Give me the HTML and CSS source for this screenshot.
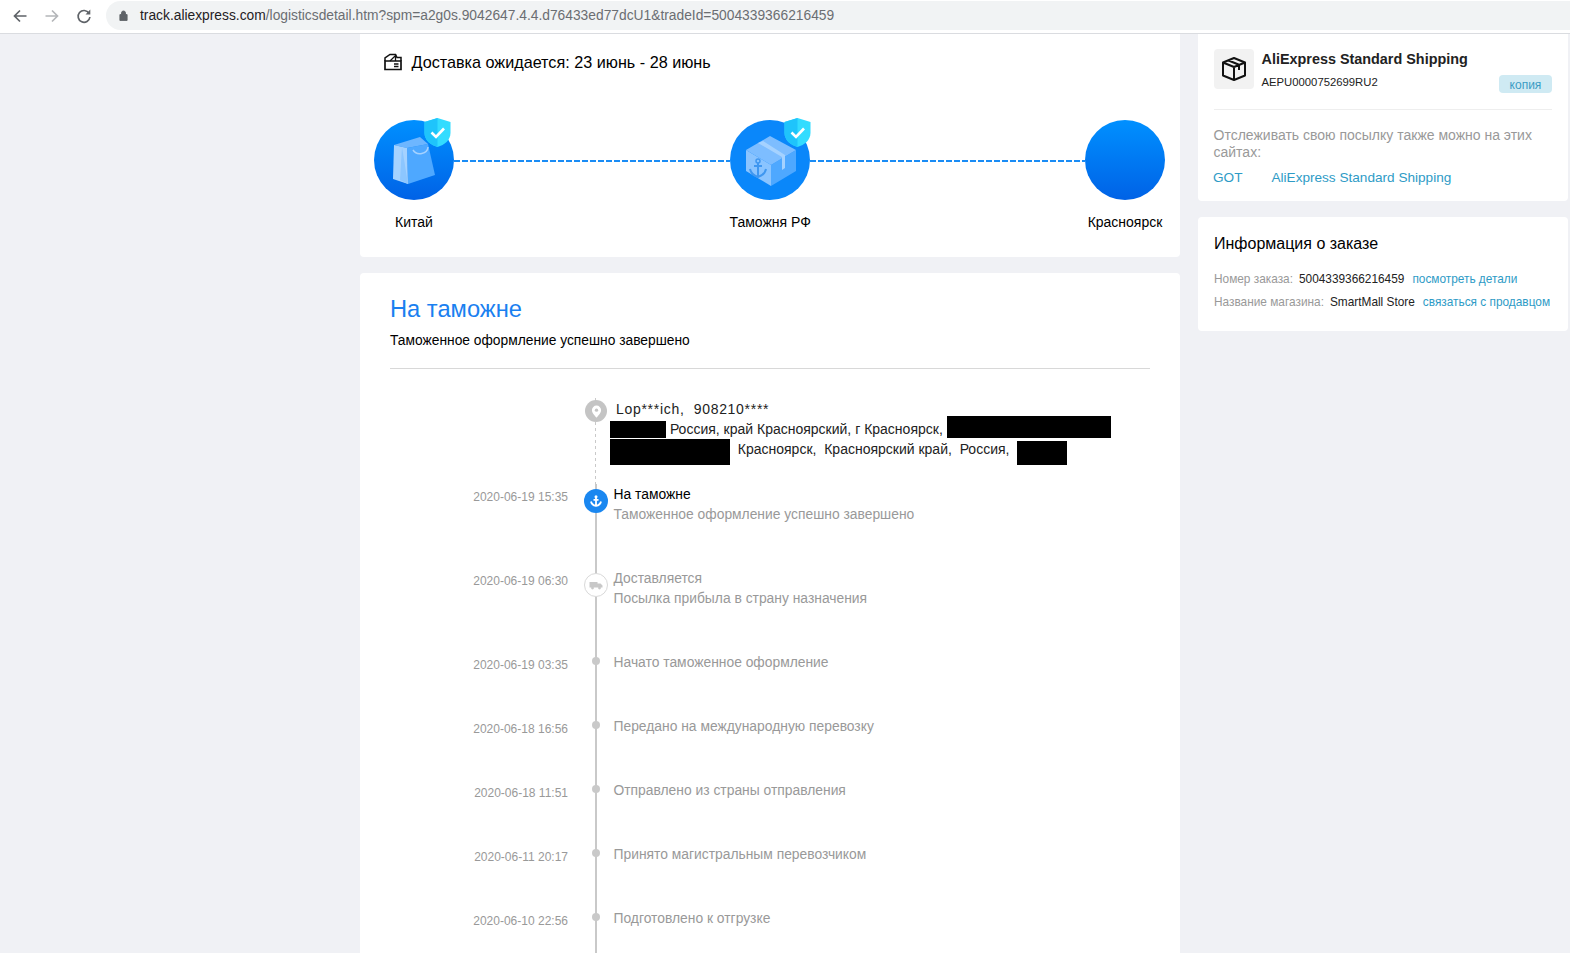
FILE: index.html
```html
<!DOCTYPE html>
<html lang="ru">
<head>
    <meta charset="UTF-8">
    <title>Logistics detail</title>
    <link rel="stylesheet" href="styles.css">
</head>
<body>
<div class="toolbar">
    <svg class="nav-icon" viewBox="0 0 16 16"><path d="M14.5 8H2.5M8 2.5L2.5 8L8 13.5" fill="none" stroke="#5f6368" stroke-width="1.7"/></svg>
    <svg class="nav-icon" viewBox="0 0 16 16"><path d="M1.5 8H13.5M8 2.5L13.5 8L8 13.5" fill="none" stroke="#b4b6b9" stroke-width="1.7"/></svg>
    <svg class="nav-icon" viewBox="0 0 16 16"><path d="M13 5.2A5.9 5.9 0 1 0 13.9 9" fill="none" stroke="#5f6368" stroke-width="1.7"/><path d="M14.3 1.6V6.4H9.5z" fill="#5f6368"/></svg>
    <div class="address">
        <svg class="lock" viewBox="0 0 10 12"><path d="M1 5h8v6.5H1zM2.8 5V3.2a2.2 2.2 0 0 1 4.4 0V5" fill="#5f6368" stroke="#5f6368" stroke-width="1"/></svg>
        <span class="host">track.aliexpress.com</span><span>/logisticsdetail.htm?spm=a2g0s.9042647.4.4.d76433ed77dcU1&amp;tradeId=5004339366216459</span>
    </div>
</div>

<div class="page">
    <div class="main-col">
        <div class="card delivery">
            <div class="eta">
                <svg class="eta-icon" viewBox="0 0 20 18"><path d="M2 8V16.5H18V8z" fill="none" stroke="#111" stroke-width="1.7"/><path d="M2 8V5L7 1.5H12.5L14 4.5H18V8" fill="none" stroke="#111" stroke-width="1.5"/><path d="M7 8L12.5 2.5V8" fill="none" stroke="#111" stroke-width="1.3"/><path d="M11 11H15.5M11 13.6H15.5" stroke="#111" stroke-width="1.5"/></svg>
                <span>Доставка ожидается: 23 июнь - 28 июнь</span>
            </div>
            <div class="route">
                <div class="stop">
                    <div class="stop-circle">
                        <svg class="stop-art" viewBox="0 0 80 80">
                            <path d="M33 28L54 24L61 55L34 64z" fill="#4ea8ff"/>
                            <path d="M20 25L46 17L54 24L33 28z" fill="#6db6ff"/>
                            <path d="M20 25L33 28L34 64L19 59z" fill="#a5d2ff"/>
                            <path d="M28 27L26 60L34 64z" fill="#8cc6ff"/>
                            <path d="M39 30a8 7 0 0 0 15 -3" fill="none" stroke="#a5d2ff" stroke-width="1.5"/>
                        </svg>
                        <svg class="shield" viewBox="0 0 26 30"><path d="M13 0L26 4V15C26 22 20 27 13 29C6 27 0 22 0 15V4z" fill="#33dcff"/><path d="M13 0L0 4V15C0 22 6 27 13 29z" fill="#1fc4fb"/><path d="M7 14.5L11.5 19L19.5 10.5" fill="none" stroke="#fff" stroke-width="2.6"/></svg>
                    </div>
                    <div class="stop-name">Китай</div>
                </div>
                <div class="dash"></div>
                <div class="stop">
                    <div class="stop-circle flat">
                        <svg class="stop-art" viewBox="0 0 80 80">
                            <path d="M41 45L66 30V51L41 66z" fill="#4ea8ff"/>
                            <path d="M16 30L40 16L66 30L41 45z" fill="#7dbdff"/>
                            <path d="M16 30L41 45V66L16 51z" fill="#8ac4ff"/>
                            <path d="M28 23L33 21L55 35V48L52 50V37z" fill="#a5d2ff"/>
                            <circle cx="28" cy="41" r="2" fill="none" stroke="#3f97f0" stroke-width="1.5"/>
                            <path d="M28 43V57M24 46H32M20 49C21 54 25 56 28 57C31 56 35 54 36 49" fill="none" stroke="#3f97f0" stroke-width="2"/>
                        </svg>
                        <svg class="shield shield-right" viewBox="0 0 26 30"><path d="M13 0L26 4V15C26 22 20 27 13 29C6 27 0 22 0 15V4z" fill="#33dcff"/><path d="M13 0L0 4V15C0 22 6 27 13 29z" fill="#1fc4fb"/><path d="M7 14.5L11.5 19L19.5 10.5" fill="none" stroke="#fff" stroke-width="2.6"/></svg>
                    </div>
                    <div class="stop-name">Таможня РФ</div>
                </div>
                <div class="dash"></div>
                <div class="stop">
                    <div class="stop-circle"></div>
                    <div class="stop-name">Красноярск</div>
                </div>
            </div>
        </div>

        <div class="card tracking">
            <h2 class="status-title">На таможне</h2>
            <div class="status-text">Таможенное оформление успешно завершено</div>
            <div class="divider"></div>

            <div class="row row-address">
                <div class="time"></div>
                <div class="axis axis-dashed">
                    <span class="dot dot-pin"><svg viewBox="0 0 12 14" width="11" height="13"><path d="M6 0.5A5 5 0 0 0 1 5.5C1 9 6 13.5 6 13.5C6 13.5 11 9 11 5.5A5 5 0 0 0 6 0.5z" fill="#fff"/><circle cx="6" cy="5.5" r="1.8" fill="#c4c4c4"/></svg></span>
                </div>
                <div class="address-text">
                    <div class="addr-name">Lop***ich,&nbsp; 908210****</div>
                    <div class="addr-line"><span class="redact r1"></span> Россия, край Красноярский, г Красноярск, <span class="redact r2"></span></div>
                    <div class="addr-line"><span class="redact r3"></span> &nbsp;Красноярск,&nbsp; Красноярский край,&nbsp; Россия,&nbsp; <span class="redact r4"></span></div>
                </div>
            </div>

            <div class="row row-big">
                <div class="time">2020-06-19 15:35</div>
                <div class="axis">
                    <span class="dot dot-now"><svg viewBox="0 0 14 14" width="14" height="14"><path d="M7 3.5V12M2 7.5C2.5 10.5 5 11.5 7 12C9 11.5 11.5 10.5 12 7.5M4.5 5.8H9.5" fill="none" stroke="#fff" stroke-width="1.8"/><circle cx="7" cy="2.8" r="1.5" fill="#fff"/></svg></span>
                </div>
                <div class="event">
                    <div class="event-title now">На таможне</div>
                    <div>Таможенное оформление успешно завершено</div>
                </div>
            </div>

            <div class="row row-big">
                <div class="time">2020-06-19 06:30</div>
                <div class="axis">
                    <span class="dot dot-truck"><svg viewBox="0 0 14 10" width="14" height="10"><path d="M0.5 2H8.5V7.5H0.5zM8.5 3.5H11.5L13.5 5.5V7.5H8.5z" fill="#c8c8c8"/><circle cx="3.5" cy="8" r="1.4" fill="#c8c8c8"/><circle cx="10.5" cy="8" r="1.4" fill="#c8c8c8"/></svg></span>
                </div>
                <div class="event">
                    <div class="event-title">Доставляется</div>
                    <div>Посылка прибыла в страну назначения</div>
                </div>
            </div>

            <div class="row">
                <div class="time">2020-06-19 03:35</div>
                <div class="axis"><span class="dot dot-small"></span></div>
                <div class="event">Начато таможенное оформление</div>
            </div>
            <div class="row">
                <div class="time">2020-06-18 16:56</div>
                <div class="axis"><span class="dot dot-small"></span></div>
                <div class="event">Передано на международную перевозку</div>
            </div>
            <div class="row">
                <div class="time">2020-06-18 11:51</div>
                <div class="axis"><span class="dot dot-small"></span></div>
                <div class="event">Отправлено из страны отправления</div>
            </div>
            <div class="row">
                <div class="time">2020-06-11 20:17</div>
                <div class="axis"><span class="dot dot-small"></span></div>
                <div class="event">Принято магистральным перевозчиком</div>
            </div>
            <div class="row">
                <div class="time">2020-06-10 22:56</div>
                <div class="axis"><span class="dot dot-small"></span></div>
                <div class="event">Подготовлено к отгрузке</div>
            </div>
        </div>
    </div>

    <div class="side-col">
        <div class="card carrier">
            <div class="carrier-head">
                <div class="carrier-icon">
                    <svg viewBox="0 0 26 26" width="26" height="26"><path d="M13 2L24 6.5V19.5L13 24L2 19.5V6.5z M2 6.5L13 11L24 6.5 M13 11V24 M7 4.3L18 8.8V14" fill="none" stroke="#111" stroke-width="2" stroke-linejoin="round"/></svg>
                </div>
                <div class="carrier-info">
                    <div class="carrier-name">AliExpress Standard Shipping</div>
                    <div class="carrier-no">AEPU0000752699RU2</div>
                </div>
                <div class="copy-btn">копия</div>
            </div>
            <div class="carrier-note">Отслеживать свою посылку также можно на этих сайтах:</div>
            <div class="carrier-links">
                <a href="#">GOT</a>
                <a href="#">AliExpress Standard Shipping</a>
            </div>
        </div>
        <div class="card order">
            <div class="order-title">Информация о заказе</div>
            <div class="order-line"><span class="order-label">Номер заказа:</span><span>5004339366216459</span><a href="#">посмотреть детали</a></div>
            <div class="order-line"><span class="order-label">Название магазина:</span><span>SmartMall Store</span><a href="#">связаться с продавцом</a></div>
        </div>
    </div>
</div>
</body>
</html>
```

FILE: styles.css
```css
html, body {
    height: 100%;
}

body {
    margin: 0;
    background-color: #f0f1f5;
    font-family: 'Liberation Sans', Tahoma, sans-serif;
    font-size: 14px;
    color: #000;
    overflow: hidden;
}

a {
    color: #2e9bc6;
    text-decoration: none;
}

/* browser bar */
.toolbar {
    display: flex;
    align-items: center;
    height: 31px;
    background-color: #fff;
    border-bottom: 1px solid #dadce0;
    padding: 0 0 2px 12px;
}

.nav-icon {
    width: 16px;
    height: 16px;
    margin-right: 16px;
}

.address {
    display: flex;
    align-items: center;
    flex: 1;
    height: 29px;
    background-color: #f1f3f4;
    border-radius: 15px 0 0 15px;
    margin-left: -2px;
    padding-left: 13px;
    color: #6b6e72;
    font-size: 13.8px;
}

.lock {
    width: 9px;
    height: 11px;
    margin-right: 12px;
}

.host {
    color: #1f2124;
}

/* page columns */
.page {
    display: flex;
    gap: 18px;
    padding-left: 360px;
}

.main-col {
    width: 820px;
    flex: none;
}

.side-col {
    width: 370px;
    flex: none;
}

.card {
    background-color: #fff;
    border-radius: 4px;
    margin-bottom: 16px;
}

/* delivery card */
.delivery {
    height: 223px;
    border-radius: 0 0 4px 4px;
    box-sizing: border-box;
    padding: 16px 15px 0 14px;
}

.eta {
    display: flex;
    align-items: center;
    gap: 8.5px;
    height: 24px;
    margin-left: 9px;
    font-size: 16.2px;
}

.eta-icon {
    width: 20px;
    height: 18px;
}

.route {
    display: flex;
    margin-top: 46px;
}

.stop {
    width: 80px;
    flex: none;
}

.stop-circle {
    position: relative;
    width: 80px;
    height: 80px;
    border-radius: 50%;
    background: linear-gradient(#0090ff, #0062e6);
}

.stop-circle.flat {
    background: #0a87fa;
}

.stop-art {
    width: 80px;
    height: 80px;
}

.shield {
    position: absolute;
    top: -2px;
    right: 3px;
    width: 27px;
    height: 30px;
}

.shield-right {
    right: -1px;
}

.stop-name {
    margin-top: 12px;
    text-align: center;
    white-space: nowrap;
    line-height: 20px;
}

.dash {
    flex: 1;
    height: 2px;
    margin-top: 40px;
    background: repeating-linear-gradient(90deg, #1a8cf5 0 6px, transparent 6px 8px);
}

/* tracking card */
.tracking {
    padding: 20px 30px 0;
    height: 700px;
    margin-bottom: 0;
}

.status-title {
    margin: 0;
    font-size: 23.7px;
    font-weight: 400;
    line-height: 32px;
    color: #1a80f0;
}

.status-text {
    margin-top: 6px;
    font-size: 13.8px;
    line-height: 20px;
}

.divider {
    border-top: 1px solid #d8d8d8;
    margin: 17px 0 29px;
}

.row {
    display: grid;
    grid-template-columns: 178px 45.5px 1fr;
    min-height: 64px;
    color: #999;
}

.row-big {
    min-height: 84px;
}

.row-address {
    min-height: 86px;
}

.time {
    font-size: 12px;
    line-height: 20px;
    text-align: right;
    padding-top: 3px;
}

.axis {
    background: linear-gradient(#c9c9c9, #c9c9c9) no-repeat 27px 0 / 2px 100%;
}

.axis-dashed {
    background: repeating-linear-gradient(#c9c9c9 0 3px, transparent 3px 6px) no-repeat 27px 0 / 1px 100%;
}

.dot {
    display: flex;
    align-items: center;
    justify-content: center;
    box-sizing: border-box;
    border-radius: 50%;
}

.dot-pin {
    width: 22px;
    height: 22px;
    margin: 2px 0 0 17px;
    background-color: #c4c4c4;
}

.dot-now {
    width: 24px;
    height: 24px;
    margin: 5px 0 0 16px;
    background-color: #1a87f0;
}

.dot-truck {
    width: 24px;
    height: 24px;
    margin: 5px 0 0 16px;
    background-color: #fff;
    border: 1px solid #d9d9d9;
}

.dot-small {
    width: 8px;
    height: 8px;
    margin: 5px 0 0 24px;
    background-color: #c9c9c9;
}

.event {
    font-size: 13.85px;
    line-height: 20px;
}

.event-title.now {
    color: #000;
}

.address-text {
    margin-left: -3.5px;
    line-height: 20px;
    color: #222;
    white-space: nowrap;
    padding-top: 1px;
}

.addr-name {
    padding-left: 6px;
    letter-spacing: 0.7px;
}

.addr-line {
    height: 20px;
}

.redact {
    display: inline-block;
    background-color: #000;
    vertical-align: top;
}

.r1 { width: 56px; height: 17px; margin-top: 2px; }
.r2 { width: 164px; height: 22px; margin-top: -3px; }
.r3 { width: 120px; height: 26px; }
.r4 { width: 50px; height: 24px; margin-top: 2px; }

/* right column */
.carrier {
    height: 167px;
    box-sizing: border-box;
    border-radius: 0 0 4px 4px;
    padding: 15px 16px 0;
}

.carrier-head {
    display: flex;
    height: 60px;
    border-bottom: 1px solid #eee;
}

.carrier-icon {
    display: flex;
    align-items: center;
    justify-content: center;
    width: 40px;
    height: 40px;
    background-color: #f2f2f2;
    border-radius: 4px;
    margin-right: 7.5px;
}

.carrier-name {
    font-size: 14.4px;
    font-weight: 700;
    line-height: 20px;
    color: #222;
}

.carrier-no {
    font-size: 11.3px;
    line-height: 20px;
    margin-top: 3px;
    color: #222;
}

.copy-btn {
    margin-left: auto;
    width: 53px;
    height: 18px;
    margin-top: 26px;
    line-height: 20px;
    text-align: center;
    background-color: #cfeaf3;
    border-radius: 4px;
    color: #3a9cc4;
    font-size: 12px;
}

.carrier-note {
    margin: 17px 0 0 -0.5px;
    line-height: 17px;
    color: #999;
}

.carrier-links {
    display: flex;
    gap: 29px;
    margin: 7px 0 0 -1px;
    font-size: 13.6px;
    line-height: 20px;
}

.order {
    height: 114px;
    box-sizing: border-box;
    padding: 17px 16px 0;
}

.order-title {
    font-size: 16px;
    line-height: 20px;
    margin-bottom: 14px;
}

.order-line {
    display: flex;
    font-size: 11.85px;
    line-height: 23px;
    white-space: nowrap;
    color: #222;
}

.order-label {
    color: #999;
    margin-right: 6px;
}

.order-line a {
    margin-left: 8px;
}
```
